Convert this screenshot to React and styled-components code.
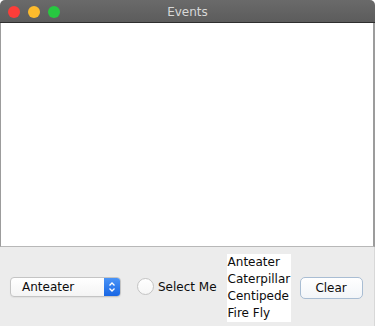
import React from 'react'
import styled, { createGlobalStyle } from 'styled-components'

const GlobalStyle = createGlobalStyle`
  html, body {
    margin: 0;
    padding: 0;
    background: #ffffff;
  }
  * {
    box-sizing: border-box;
  }
`

const Window = styled.div`
  display: flex;
  flex-direction: column;
  width: 375px;
  height: 326px;
  font-family: 'DejaVu Sans', 'Liberation Sans', sans-serif;
  font-size: 12px;
  color: #0c0c0c;
  overflow: hidden;
`

const TitleBar = styled.div`
  position: relative;
  display: flex;
  align-items: center;
  justify-content: center;
  height: 23px;
  flex-shrink: 0;
  background: linear-gradient(#6a6a6a, #5c5c5c);
  border-radius: 5px 5px 0 0;
  border-bottom: 1px solid #2e2e2e;
`

const Lights = styled.div`
  position: absolute;
  left: 8px;
  top: 6px;
  display: flex;
  gap: 8px;
`

const Light = styled.span`
  width: 12px;
  height: 12px;
  border-radius: 50%;
  background: ${(p) => p.color};
`

const Title = styled.span`
  color: #d8d8d8;
  font-size: 12px;
  line-height: 22px;
  padding-top: 2px;
`

const EventArea = styled.div`
  flex: 1;
  background: #ffffff;
  border-left: 1px solid #9c9c9c;
  border-right: 2px solid #9c9c9c;
  border-bottom: 1px solid #b8b8b8;
`

const ControlPanel = styled.div`
  display: flex;
  align-items: center;
  height: 79px;
  flex-shrink: 0;
  padding-left: 10px;
  background: #ececec;
  border-right: 1px solid #d8d8d8;
`

const Combo = styled.div`
  display: flex;
  width: 111px;
  height: 20px;
  border: 1px solid #c4c4c4;
  border-radius: 4px;
  background: linear-gradient(#ffffff, #f4f4f4);
  overflow: hidden;
  box-shadow: 0 1px 1px rgba(0, 0, 0, 0.05);
`

const ComboText = styled.span`
  flex: 1;
  padding-left: 11px;
  line-height: 18px;
`

const ComboArrow = styled.span`
  display: flex;
  align-items: center;
  justify-content: center;
  width: 16px;
  background: linear-gradient(#4a94f7, #1866e4);
`

const Radio = styled.label`
  display: flex;
  align-items: center;
  gap: 4px;
  margin-left: 16px;
`

const RadioCircle = styled.span`
  width: 17px;
  height: 17px;
  border-radius: 50%;
  border: 1px solid #c4c4c4;
  background: linear-gradient(#ffffff, #f6f6f6);
`

const List = styled.ul`
  list-style: none;
  margin: 2px 0 0 10px;
  padding: 0 0 0 1px;
  width: 64px;
  height: 68px;
  background: #ffffff;
`

const ListItem = styled.li`
  height: 17px;
  line-height: 17px;
  white-space: nowrap;
`

const Button = styled.button`
  margin-left: 9px;
  margin-top: 2px;
  width: 63px;
  height: 22px;
  border: 1px solid #a9bdd3;
  border-radius: 5px;
  background: linear-gradient(#ffffff, #f2f5f8);
  font-family: inherit;
  font-size: 12px;
  color: #0c0c0c;
  padding: 0;
`

function Chevrons() {
  return (
    <svg width="8" height="12" viewBox="0 0 8 12">
      <path d="M1.5 4.5 L4 2 L6.5 4.5 M1.5 7.5 L4 10 L6.5 7.5" stroke="#fff" strokeWidth="1.3" fill="none" />
    </svg>
  )
}

export default function App() {
  return (
    <Window>
      <GlobalStyle />
      <TitleBar>
        <Lights>
          <Light color="#fc3d39" />
          <Light color="#fdbb2d" />
          <Light color="#27c840" />
        </Lights>
        <Title>Events</Title>
      </TitleBar>
      <EventArea />
      <ControlPanel>
        <Combo>
          <ComboText>Anteater</ComboText>
          <ComboArrow>
            <Chevrons />
          </ComboArrow>
        </Combo>
        <Radio>
          <RadioCircle />
          Select Me
        </Radio>
        <List>
          <ListItem>Anteater</ListItem>
          <ListItem>Caterpillar</ListItem>
          <ListItem>Centipede</ListItem>
          <ListItem>Fire Fly</ListItem>
        </List>
        <Button type="button">Clear</Button>
      </ControlPanel>
    </Window>
  )
}
